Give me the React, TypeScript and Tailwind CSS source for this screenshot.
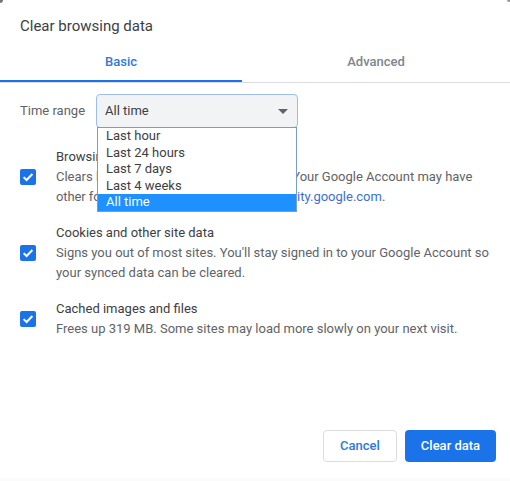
import type { ReactNode } from "react";

const timeRanges = ["Last hour", "Last 24 hours", "Last 7 days", "Last 4 weeks", "All time"];

function Checkbox() {
  return (
    <div className="w-4 h-4 rounded-[2px] bg-[#1a73e8] flex items-center justify-center shrink-0">
      <svg width="12" height="12" viewBox="0 0 12 12" fill="none">
        <path d="M1.6 6.1 L4.6 9 L10.4 3" stroke="white" strokeWidth="2" />
      </svg>
    </div>
  );
}

function OptionRow({ title, children, className }: { title: string; children: ReactNode; className: string }) {
  return (
    <div className={`flex items-center pl-5 ${className}`}>
      <Checkbox />
      <div className="ml-5 text-[13px] leading-[20px]">
        <div className="text-[#3c4043]">{title}</div>
        <div className="text-[#5f6368] whitespace-pre">{children}</div>
      </div>
    </div>
  );
}

export default function App() {
  return (
    <div className="relative w-[510px] h-[481px] bg-[#fbfbfb] overflow-hidden font-['Roboto',sans-serif]">
      <div className="flex flex-col h-[478px] bg-white">
        <h1 className="text-[15px] leading-[20px] text-[#3c4043] pl-5 pt-4 h-[50px]">Clear browsing data</h1>

        <div className="flex h-[33px] border-b border-[#dadce0] text-[13px] font-medium">
          <div className="w-[242px] h-[32px] border-b-2 border-[#1a73e8] text-[#2f78dc] flex items-center justify-center pb-[6px]">Basic</div>
          <div className="flex-1 text-[#80868b] flex items-center justify-center pb-[8px]">Advanced</div>
        </div>

        <div className="flex items-center pl-5 mt-[11px] h-[34px]">
          <span className="text-[13px] text-[#5f6368] w-[76px]">Time range</span>
          <div className="relative w-[202px] h-[34px] rounded-[4px] border border-[#9dbde8] bg-[#f1f3f4] flex items-center justify-between pl-2 pr-[9px] text-[13px] text-[#3c4043]">
            <span>All time</span>
            <div className="w-0 h-0 border-x-[5px] border-x-transparent border-t-[5px] border-t-[#5f6368]" />
            <div className="absolute left-0 top-[32px] w-[200px] h-[85px] border border-[#7a9bd0] bg-white text-[13px] leading-[16.5px] text-[#3c4043] z-10">
              {timeRanges.map((range) => (
                <div key={range} className={range === "All time" ? "pl-2 bg-[#1e90ff] text-white" : "pl-2"}>
                  {range}
                </div>
              ))}
            </div>
          </div>
        </div>

        <OptionRow className="mt-[19px]" title="Browsing history">
          {"Clears history from all signed-in devices. Your Google Account may have\n"}
          <span className="tracking-[-0.1px]">other forms of browsing history at </span>
          <span className="text-[#3b6fd0]">myactivity.google.com</span>.
        </OptionRow>
        <OptionRow className="mt-[16px]" title="Cookies and other site data">
          {"Signs you out of most sites. You'll stay signed in to your Google Account so\nyour synced data can be cleared."}
        </OptionRow>
        <OptionRow className="mt-[16px]" title="Cached images and files">
          Frees up 319 MB. Some sites may load more slowly on your next visit.
        </OptionRow>

        <div className="mt-auto flex justify-end gap-2 pr-[14px] pb-4 text-[13px] font-medium">
          <button className="w-[74px] h-[32px] rounded-[4px] border border-[#dadce0] bg-white text-[#2f78dc]">Cancel</button>
          <button className="w-[91px] h-[32px] rounded-[4px] bg-[#1a73e8] text-white">Clear data</button>
        </div>
      </div>

      <div className="absolute left-0 top-0 w-[3px] h-[3px] bg-[#777] rounded-br-[3px]" />
      <div className="absolute right-0 top-0 w-[3px] h-[2px] bg-[#999] rounded-bl-[2px]" />
    </div>
  );
}
